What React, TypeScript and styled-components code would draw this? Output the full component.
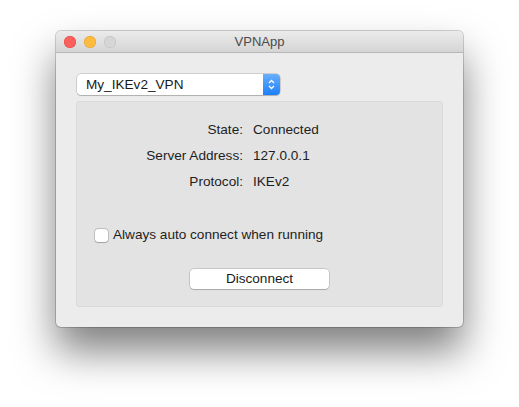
import React from 'react'
import styled, { createGlobalStyle } from 'styled-components'

const GlobalStyle = createGlobalStyle`
  html, body {
    margin: 0;
    padding: 0;
    background: #ffffff;
  }
  body {
    font-family: 'Liberation Sans', Arial, sans-serif;
    font-size: 13.6px;
    color: #1e1e1e;
  }
`

const Page = styled.div`
  width: 519px;
  height: 407px;
  padding: 31px 0 0 56px;
  box-sizing: border-box;
`

const Window = styled.div`
  width: 407px;
  height: 296px;
  background: #ececec;
  border-radius: 5px;
  box-shadow: 0 0 0 1px rgba(0, 0, 0, 0.18), 0 24px 40px rgba(0, 0, 0, 0.5);
  overflow: hidden;
  display: flex;
  flex-direction: column;
`

const TitleBar = styled.div`
  height: 22px;
  flex: none;
  background: linear-gradient(#ebebeb, #d5d5d5);
  border-bottom: 1px solid #b8b8b8;
  box-sizing: border-box;
  display: grid;
  grid-template-columns: 1fr auto 1fr;
  align-items: center;
  padding: 0 8px;
`

const Lights = styled.div`
  display: flex;
  gap: 8px;
`

const Light = styled.span<{ $color: string; $edge: string }>`
  width: 12px;
  height: 12px;
  border-radius: 50%;
  background: ${(p) => p.$color};
  box-shadow: inset 0 0 0 0.5px ${(p) => p.$edge};
`

const Title = styled.div`
  font-size: 13px;
  color: #4b4b4b;
`

const Content = styled.div`
  flex: 1;
  padding: 21px 20px 20px 20px;
  display: flex;
  flex-direction: column;
`

const Popup = styled.div`
  width: 203px;
  height: 21px;
  margin-left: 1px;
  box-sizing: border-box;
  background: #ffffff;
  border-radius: 4px;
  box-shadow: 0 0 0 0.5px rgba(0, 0, 0, 0.25), 0 1px 1px rgba(0, 0, 0, 0.15);
  display: flex;
  align-items: stretch;
`

const PopupText = styled.div`
  flex: 1;
  padding-left: 9px;
  line-height: 21px;
  color: #1a1a1a;
`

const Stepper = styled.div`
  width: 17px;
  border-radius: 0 4px 4px 0;
  background: linear-gradient(#68b0fb, #1d7ffb);
  display: flex;
  align-items: center;
  justify-content: center;
`

const Group = styled.div`
  margin-top: 6px;
  flex: 1;
  background: #e3e3e3;
  border-radius: 4px;
  box-shadow: inset 0 0 0 1px rgba(0, 0, 0, 0.04);
  display: flex;
  flex-direction: column;
  padding-top: 21px;
`

const InfoGrid = styled.div`
  display: grid;
  grid-template-columns: 167px auto;
  column-gap: 10px;
  row-gap: 10px;
  line-height: 16px;
`

const Label = styled.div`
  text-align: right;
  color: #1e1e1e;
`

const Value = styled.div`
  color: #1e1e1e;
`

const CheckRow = styled.label`
  margin-top: 37px;
  margin-left: 19px;
  display: flex;
  align-items: center;
  gap: 5px;
  line-height: 16px;
`

const Box = styled.span`
  width: 13px;
  height: 13px;
  box-sizing: border-box;
  background: #ffffff;
  border-radius: 3px;
  box-shadow: 0 0 0 0.5px rgba(0, 0, 0, 0.3), 0 0.5px 1px rgba(0, 0, 0, 0.15);
`

const ButtonRow = styled.div`
  margin-top: 26px;
  display: flex;
  justify-content: center;
`

const Button = styled.div`
  width: 139px;
  height: 20px;
  background: #ffffff;
  border-radius: 4px;
  box-shadow: 0 0 0 0.5px rgba(0, 0, 0, 0.25), 0 1px 1px rgba(0, 0, 0, 0.15);
  text-align: center;
  line-height: 20px;
  color: #1a1a1a;
`

const rows = [
  ['State:', 'Connected'],
  ['Server Address:', '127.0.0.1'],
  ['Protocol:', 'IKEv2'],
]

export default function App() {
  return (
    <Page>
      <GlobalStyle />
      <Window>
        <TitleBar>
          <Lights>
            <Light $color="#fc605c" $edge="#de4643" />
            <Light $color="#fdbc40" $edge="#de9f34" />
            <Light $color="#d6d6d6" $edge="#bdbdbd" />
          </Lights>
          <Title>VPNApp</Title>
          <div />
        </TitleBar>
        <Content>
          <Popup>
            <PopupText>My_IKEv2_VPN</PopupText>
            <Stepper>
              <svg width="7" height="11" viewBox="0 0 7 11">
                <path d="M1 4 L3.5 1.5 L6 4 M1 7 L3.5 9.5 L6 7" fill="none" stroke="#fff" strokeWidth="1.3" />
              </svg>
            </Stepper>
          </Popup>
          <Group>
            <InfoGrid>
              {rows.map(([k, v]) => (
                <React.Fragment key={k}>
                  <Label>{k}</Label>
                  <Value>{v}</Value>
                </React.Fragment>
              ))}
            </InfoGrid>
            <CheckRow>
              <Box />
              <span>Always auto connect when running</span>
            </CheckRow>
            <ButtonRow>
              <Button>Disconnect</Button>
            </ButtonRow>
          </Group>
        </Content>
      </Window>
    </Page>
  )
}
